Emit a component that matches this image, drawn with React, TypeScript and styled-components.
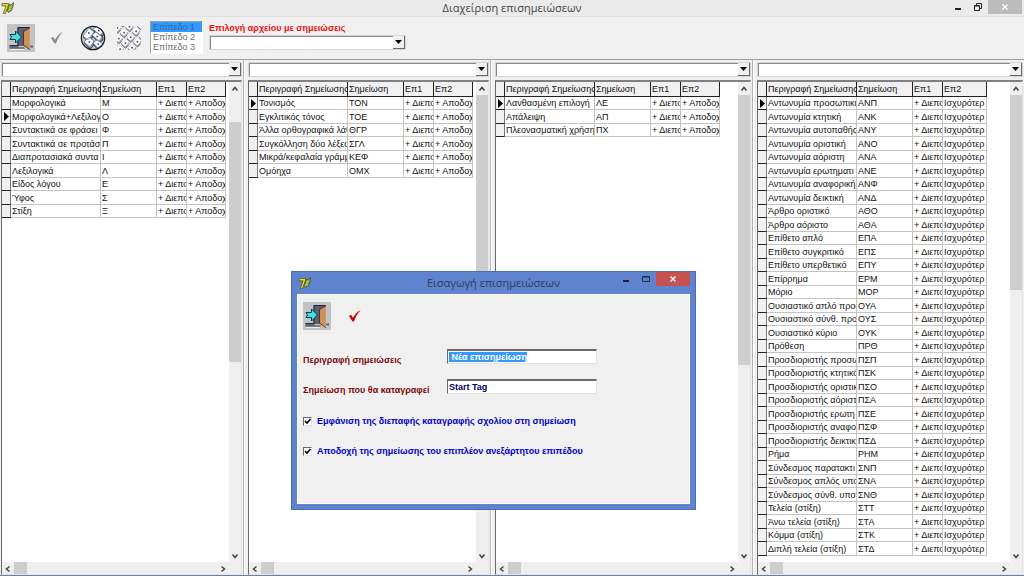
import React, { useEffect, useRef } from "react";
import styled, { createGlobalStyle, css } from "styled-components";

const GlobalStyle = createGlobalStyle`
  *, *::before, *::after { box-sizing: border-box; }
  html, body { margin: 0; padding: 0; background: #f0f0f0; }
  body, button, input, select, table {
    font-family: "Liberation Sans", Arial, sans-serif;
    font-size: 9px;
    line-height: 12px;
  }
  button { border: 0; padding: 0; background: none; display: flex; flex: none; align-items: center; justify-content: center; }
`;

const Window = styled.div`
  position: relative;
  min-height: 100vh;
  display: flex;
  flex-direction: column;
  background: #f0f0f0;
  color: #111;
  border-bottom: 2px solid #6f7f9d;
  overflow: hidden;
`;

const TitleBar = styled.header`
  display: grid;
  grid-template-columns: 76px 1fr 76px;
  align-items: center;
  height: 17px;
  background: #ebebeb;
  border-bottom: 1px solid #e0e0e0;
`;

const Title = styled.h1`
  margin: 0;
  font: 400 11px/16px "Open Sans", "Noto Sans", sans-serif;
  color: #444;
  text-align: center;
`;

const LogoSlot = styled.span`
  display: flex;
  padding-left: 1px;
`;

const WindowButtons = styled.div<{ $inset?: boolean }>`
  display: flex;
  justify-content: flex-end;
  align-items: flex-start;
  align-self: start;
  padding-right: ${(p) => (p.$inset ? 2 : 0)}px;
`;

const WindowButton = styled.button<{ $kind: "plain" | "muted" | "close" }>`
  height: 14px;
  width: ${(p) => (p.$kind === "plain" ? 20 : 34)}px;
  background: ${(p) => ({ plain: "transparent", muted: "#bcbcbc", close: "#c75050" })[p.$kind]};
`;

const Toolbar = styled.div`
  display: flex;
  align-items: flex-start;
  height: 43px;
  padding: 4px 7px 0;
  border-bottom: 1px solid #a0a0a0;
`;

const Tools = styled.div`
  display: flex;
  align-items: center;
  gap: 8px;
  padding-top: 3px;
  padding-right: 7px;
`;

const ToolButton = styled.button<{ $raised?: boolean }>`
  width: 28px;
  height: 28px;
  ${(p) => p.$raised && css`background: #c3c3c6;`}
`;

const LevelList = styled.select`
  width: 53px;
  height: 33px;
  padding: 0;
  overflow: hidden;
  border: 1px solid #a0a0a0;
  border-right-color: #fff;
  border-bottom-color: #fff;
  border-radius: 0;
  background: #fff;
  color: #6d6d6d;
  opacity: 1;
  outline: none;
  scrollbar-width: none;
  option {
    height: 10px;
    min-height: 10px;
    padding: 0 2px;
    font-size: 9px;
    line-height: 10px;
    color: #6d6d6d;
  }
  option:checked {
    background: #3399ff linear-gradient(#3399ff, #3399ff);
    color: #2f6ba8;
  }
`;

const FileField = styled.div`
  display: flex;
  flex-direction: column;
  gap: 1px;
  width: 203px;
  padding-left: 6px;
  padding-top: 1px;
`;

const FileLabel = styled.label`
  color: #ee1111;
  font-weight: 700;
  white-space: nowrap;
`;

const ComboBox = styled.div`
  display: grid;
  grid-template-columns: 1fr 12px;
  height: 15px;
  border: 1px solid #fff;
  border-top-color: #696969;
  border-left-color: #696969;
  background: #fff;
  outline: 1px solid #d5d5d5;
  outline-offset: -1px;
  box-shadow: inset 1px 1px 0 #8a8a8a;
`;

const ComboSelect = styled.select`
  grid-area: 1 / 1 / 2 / 3;
  appearance: none;
  width: 100%;
  height: 13px;
  border: 0;
  padding: 0 14px 0 3px;
  background: transparent;
  outline: none;
`;

const ComboArrow = styled.span`
  grid-area: 1 / 2 / 2 / 3;
  display: flex;
  align-items: center;
  justify-content: center;
  pointer-events: none;
  background: #f0f0f0;
  border-right: 1px solid #696969;
  border-bottom: 1px solid #696969;
`;

const Panels = styled.main`
  flex: 1;
  display: grid;
  grid-template-columns: 244fr 247fr 262fr 271fr;
  min-height: 0;
`;

const Panel = styled.section`
  display: flex;
  flex-direction: column;
  gap: 3px;
  min-width: 0;
  padding: 2px 1px 0;
  border-right: 1px solid #b4b4b4;
  & + & {
    padding-left: 3px;
    border-left: 1px solid #fff;
  }
  &:last-child {
    border-right: 0;
  }
`;

const GridFrame = styled.div`
  flex: 1;
  display: grid;
  grid-template-columns: minmax(0, 1fr) 12px;
  grid-template-rows: 1fr 12px;
  border: 1px solid #e3e3e3;
  border-top: 2px solid #808080;
  border-left-color: #696969;
  background: #fff;
`;

const TableArea = styled.div`
  overflow: hidden;
  padding-bottom: 6px;
`;

const DataTable = styled.table<{ $wide?: boolean }>`
  table-layout: fixed;
  width: ${(p) => (p.$wide ? 229 : 224)}px;
  border-collapse: separate;
  border-spacing: 0;
`;

const MarkerHead = styled.th`
  width: 9px;
  height: 15px;
  padding: 0;
  background: #f0f0f0;
  border-right: 1px solid #222;
  border-bottom: 1px solid #222;
`;

const HeadCell = styled.th<{ $width?: number }>`
  ${(p) => p.$width && css`width: ${p.$width}px;`}
  height: 15px;
  padding: 0 0 0 1px;
  overflow: hidden;
  white-space: nowrap;
  text-align: left;
  font-weight: 400;
  background: #f0f0f0;
  border-right: 1px solid #222;
  border-bottom: 1px solid #222;
`;

const Row = styled.tr`
  height: 13px;
  &:nth-child(even) { height: 14px; }
`;

const MarkerCell = styled.td`
  padding: 0;
  line-height: 0;
  background: #f0f0f0;
  border-right: 1px solid #777;
  border-bottom: 1px solid #222;
`;

const Cell = styled.td`
  padding: 0 0 0 1px;
  overflow: hidden;
  white-space: nowrap;
  text-overflow: clip;
  border-right: 1px solid #c4c4c4;
  border-bottom: 1px solid #c4c4c4;
`;

const ScrollBar = styled.div<{ $horizontal?: boolean }>`
  display: flex;
  flex-direction: ${(p) => (p.$horizontal ? "row" : "column")};
  background: #efefef;
`;

const ScrollButton = styled.button`
  width: 12px;
  height: 13px;
`;

const Track = styled.div<{ $offset: number }>`
  flex: 1;
  padding-top: ${(p) => p.$offset}px;
`;

const Thumb = styled.div<{ $size: number; $horizontal?: boolean }>`
  background: #cdcdcd;
  width: ${(p) => (p.$horizontal ? p.$size : 12)}px;
  height: ${(p) => (p.$horizontal ? 12 : p.$size)}px;
`;

const Corner = styled.div`
  background: #efefef;
`;

const Dialog = styled.div`
  position: absolute;
  left: 291px;
  top: 271px;
  width: 405px;
  padding: 0 5px 5px;
  background: #6083cf;
  border: 1px solid #4f6cb3;
`;

const DialogTitleBar = styled.div`
  display: grid;
  grid-template-columns: 76px 1fr 76px;
  align-items: center;
  height: 22px;
`;

const DialogTitle = styled.h2`
  margin: 0;
  font: 400 11px/16px "Open Sans", "Noto Sans", sans-serif;
  color: #2b3a60;
  text-align: center;
`;

const DialogBody = styled.form`
  display: flex;
  flex-direction: column;
  padding: 7px 5px 37px;
  background: #f0f0f0;
  border: 1px solid #fff;
`;

const DialogTools = styled.div`
  display: flex;
  gap: 10px;
  padding-bottom: 19px;
`;

const Fields = styled.div`
  display: flex;
  flex-direction: column;
  height: 57px;
`;

const FieldRow = styled.div`
  display: grid;
  flex: none;
  grid-template-columns: 144px 150px;
  height: 30px;
`;

const FieldLabel = styled.label`
  padding-top: 5px;
  font-weight: 700;
  color: #7d0a0a;
  white-space: nowrap;
`;

const TextBox = styled.input`
  height: 15px;
  padding: 0 1px;
  border: 1px solid #e3e3e3;
  border-top: 2px solid #696969;
  border-left-color: #696969;
  border-radius: 0;
  outline: none;
  background: #fff;
  color: #000066;
  font-weight: 700;
  &::selection { background: #3399ff; color: #fff; }
`;

const CheckRow = styled.label`
  display: flex;
  align-items: center;
  gap: 5px;
  height: 30px;
  font-weight: 700;
  color: #0000c8;
  white-space: nowrap;
`;

const CheckBox = styled.span`
  display: grid;
  width: 9px;
  height: 9px;
  input {
    grid-area: 1 / 1;
    appearance: none;
    width: 9px;
    height: 9px;
    margin: 0;
    background: #fff;
    border: 1px solid #e3e3e3;
    border-top-color: #696969;
    border-left-color: #696969;
  }
  svg { grid-area: 1 / 1; visibility: hidden; pointer-events: none; z-index: 1; }
  input:checked + svg { visibility: visible; }
`;

const AppLogo = () => (
  <svg width="14" height="14" viewBox="0 0 14 14" aria-hidden="true">
    <path d="M1 2.500h6.500v1.700L4.500 12.500H2.300L5 4.800H1z" fill="#e6dc28" stroke="#4c4c18" strokeWidth="0.700" />
    <path d="M7.500 6l1-3 1.500 1 2.500-2.500-.5 4-1.500 4-3 2-1.500-2z" fill="#8aa83c" stroke="#2f4a28" strokeWidth="0.700" />
    <path d="M8 7l3-2.500M7.500 9.500L10 8" stroke="#dfe04a" strokeWidth="1" />
  </svg>
);

const DoorIcon = () => (
  <svg width="28" height="28" viewBox="0 0 28 28" aria-hidden="true">
    <path d="M2.500 21.500h9v2h-9zM22 21.500h4v2h-4z" fill="#5a6478" />
    <path d="M2.500 24h15M2.500 21.500h9" stroke="#23262e" strokeWidth="0.900" />
    <path d="M3 25.500h14" stroke="#efefef" strokeWidth="1" />
    <rect x="10.500" y="3" width="12" height="19" fill="#56627a" />
    <path d="M11 22V3.500h11.500" fill="none" stroke="#20242e" strokeWidth="1" />
    <path d="M16.500 7.500L22.500 4v21.500L16.500 21z" fill="#d38f58" stroke="#59331a" strokeWidth="1" />
    <path d="M22.700 4.500v20.500" stroke="#f3c596" strokeWidth="0.900" />
    <circle cx="19" cy="14" r="1" fill="#fff2b0" stroke="#7a4520" strokeWidth="0.400" />
    <path d="M3 10.500h5.500V7l6 6-6 6v-3.500H3L4.500 13z" fill="#45dfe2" stroke="#083c45" strokeWidth="1" />
  </svg>
);

const CheckIcon = ({ color }: { color: string }) => (
  <svg width="14" height="14" viewBox="0 0 14 14" aria-hidden="true">
    <path d="M1 7l2-1.200 2 3C7 5 9.500 2.500 12.800 1 9.500 4 7.500 8 6 12.500H4.500z" fill={color} />
  </svg>
);

const KeysIcon = () => (
  <svg width="28" height="28" viewBox="0 0 28 28" aria-hidden="true">
    <clipPath id="keys-disc"><circle cx="14" cy="14" r="11.500" /></clipPath>
    <g clipPath="url(#keys-disc)">
      <rect width="28" height="28" fill="#b4c8cc" />
      <g strokeLinejoin="round">
        <path d="M4 13l7-9 5 4v2l-6 8zM15 6l5-4 6 6v3l-5 2zM13 12l4-4 7 5v3l-4 3zM5 19l5-6 6 5v2l-5 5zM14 20l4-4 6 4v3l-5 3z" fill="#75888e" stroke="#26363c" strokeWidth="0.700" />
        <path d="M4 12l6-8 5 4-6 8zM14 5l5-3 6 6-4 3zM13 11l4-3 6 5-3 4zM5 18l5-5 5 4-4 6zM14 19l4-3 6 4-5 4z" fill="#fbfbff" stroke="#5a666c" strokeWidth="0.500" />
      </g>
      <path d="M9 9h1.600M19 6.500h1.600M17.500 12.500h1.600M9.500 18h1.600M18.500 20h1.600" stroke="#3438a8" strokeWidth="1.600" />
    </g>
    <circle cx="14" cy="14" r="11.700" fill="none" stroke="#151a1c" strokeWidth="1.200" />
  </svg>
);

const KeyboardPatternIcon = () => (
  <svg width="26" height="26" viewBox="0 0 26 26" aria-hidden="true">
    <clipPath id="pattern-area"><rect x="1" y="1" width="24" height="24" /></clipPath>
    <g clipPath="url(#pattern-area)">
      <g transform="rotate(-48 13 13)">
        {[-5, 3, 11, 19].map((y, row) =>
          [-7, 1, 9, 17, 25].map((x) => (
            <g key={`${x}:${y}`}>
              <rect x={x + row} y={y} width="6.500" height="6.500" fill="#a9a9ae" />
              <rect x={x + row + 1} y={y} width="5.500" height="5" rx="1" fill="#fff" />
              <path d={`M${x + row} ${y + 1}v5.500h4`} fill="none" stroke="#6f7178" strokeWidth="0.900" />
              <rect x={x + row + 3} y={y + 2} width="1.600" height="1.600" fill="#3a3fa6" />
            </g>
          ))
        )}
      </g>
    </g>
  </svg>
);

const MinimizeGlyph = () => (
  <svg width="8" height="8" viewBox="0 0 8 8" aria-hidden="true"><path d="M1 6h6" stroke="#222" strokeWidth="2" /></svg>
);
const MaximizeGlyph = () => (
  <svg width="8" height="8" viewBox="0 0 8 8" aria-hidden="true"><path d="M.5 1.500h7v5h-7zM.5 2h7" fill="none" stroke="#1e2a48" /></svg>
);
const RestoreGlyph = () => (
  <svg width="8" height="8" viewBox="0 0 8 8" aria-hidden="true"><path d="M.5 2.500h5v5h-5zM2.500 2V.5h5v5H6M.5 3h5" fill="none" stroke="#222" /></svg>
);
const CloseGlyph = () => (
  <svg width="8" height="8" viewBox="0 0 8 8" aria-hidden="true"><path d="M1.500 1.500l5 5M6.500 1.500l-5 5" stroke="#fff" strokeWidth="1.300" /></svg>
);

const chevrons = {
  up: "M1.500 5.500L4 2.500l2.500 3",
  down: "M1.500 2.500L4 5.500l2.500-3",
  left: "M5.500 1.500L2.500 4l3 2.500",
  right: "M2.500 1.500L5.500 4l-3 2.500",
};
const Chevron = ({ dir }: { dir: keyof typeof chevrons }) => (
  <svg width="8" height="8" viewBox="0 0 8 8" aria-hidden="true">
    <path d={chevrons[dir]} fill="none" stroke="#444" strokeWidth="1.500" />
  </svg>
);

const Combo = ({ id, label }: { id?: string; label?: string }) => (
  <ComboBox>
    <ComboSelect id={id} aria-label={label} defaultValue=""><option value="" /></ComboSelect>
    <ComboArrow>
      <svg width="7" height="4" viewBox="0 0 7 4" aria-hidden="true"><path d="M0 0h7L3.500 4z" fill="#000" /></svg>
    </ComboArrow>
  </ComboBox>
);

type Note = [description: string, code: string];

interface PanelData {
  name: string;
  current: number;
  last: string;
  wide?: boolean;
  thumbTop: number;
  thumbSize: number;
  rows: Note[];
}

const panels: PanelData[] = [
  {
    name: "Επίπεδο 1", current: 1, last: "+ Αποδοχ", thumbTop: 27, thumbSize: 240,
    rows: [
      ["Μορφολογικά", "Μ"], ["Μορφολογικά+Λεξιλογι", "Ο"], ["Συντακτικά σε φράσει", "Φ"],
      ["Συντακτικά σε προτάσ", "Π"], ["Διαπροτασιακά συντα", "Ι"], ["Λεξιλογικά", "Λ"],
      ["Είδος λόγου", "Ε"], ["Ύφος", "Σ"], ["Στίξη", "Ξ"],
    ],
  },
  {
    name: "Επίπεδο 2", current: 0, last: "+ Αποδοχ", thumbTop: 0, thumbSize: 270,
    rows: [
      ["Τονισμός", "ΤΟΝ"], ["Εγκλιτικός τόνος", "ΤΟΕ"], ["Άλλα ορθογραφικά λάθ", "ΘΓΡ"],
      ["Συγκόλληση δύο λέξεω", "ΣΓΛ"], ["Μικρά/κεφαλαία γράμμ", "ΚΕΦ"], ["Ομόηχα", "ΟΜΧ"],
    ],
  },
  {
    name: "Επίπεδο 3", current: 0, last: "+ Αποδοχ", thumbTop: 0, thumbSize: 270,
    rows: [["Λανθασμένη επιλογή", "ΛΕ"], ["Απάλειψη", "ΑΠ"], ["Πλεονασματική χρήση", "ΠΧ"]],
  },
  {
    name: "Επίπεδο 4", current: 0, last: "Ισχυρότερ", wide: true, thumbTop: 0, thumbSize: 195,
    rows: [
      ["Αντωνυμία προσωπική", "ΑΝΠ"], ["Αντωνυμία κτητική", "ΑΝΚ"], ["Αντωνυμία αυτοπαθής", "ΑΝΥ"],
      ["Αντωνυμία οριστική", "ΑΝΟ"], ["Αντωνυμία αόριστη", "ΑΝΑ"], ["Αντωνυμία ερωτηματι", "ΑΝΕ"],
      ["Αντωνυμία αναφορική", "ΑΝΦ"], ["Αντωνυμία δεικτική", "ΑΝΔ"], ["Άρθρο οριστικό", "ΑΘΟ"],
      ["Άρθρο αόριστο", "ΑΘΑ"], ["Επίθετο απλό", "ΕΠΑ"], ["Επίθετο συγκριτικό", "ΕΠΣ"],
      ["Επίθετο υπερθετικό", "ΕΠΥ"], ["Επίρρημα", "ΕΡΜ"], ["Μόριο", "ΜΟΡ"],
      ["Ουσιαστικό απλό προσ", "ΟΥΑ"], ["Ουσιαστικό σύνθ. προσ", "ΟΥΣ"],
      ["Ουσιαστικό κύριο", "ΟΥΚ"], ["Πρόθεση", "ΠΡΘ"], ["Προσδιοριστής προσω", "ΠΣΠ"],
      ["Προσδιοριστής κτητικό", "ΠΣΚ"], ["Προσδιοριστής οριστικ", "ΠΣΟ"],
      ["Προσδιοριστής αόριστ", "ΠΣΑ"], ["Προσδιοριστής ερωτη", "ΠΣΕ"],
      ["Προσδιοριστής αναφο", "ΠΣΦ"], ["Προσδιοριστής δεικτικ", "ΠΣΔ"], ["Ρήμα", "ΡΗΜ"],
      ["Σύνδεσμος παρατακτι", "ΣΝΠ"], ["Σύνδεσμος απλός υποτ", "ΣΝΑ"],
      ["Σύνδεσμος σύνθ. υποτ", "ΣΝΘ"], ["Τελεία (στίξη)", "ΣΤΤ"],
      ["Άνω τελεία (στίξη)", "ΣΤΑ"], ["Κόμμα (στίξη)", "ΣΤΚ"], ["Διπλή τελεία (στίξη)", "ΣΤΔ"],
    ],
  },
];

const NotePanel = ({ data }: { data: PanelData }) => (
  <Panel aria-label={data.name}>
    <Combo label={data.name} />
    <GridFrame>
      <TableArea>
        <DataTable $wide={data.wide}>
          <thead>
            <tr>
              <MarkerHead aria-hidden="true" />
              <HeadCell $width={90}>Περιγραφή Σημείωσης</HeadCell>
              <HeadCell $width={56}>Σημείωση</HeadCell>
              <HeadCell $width={30}>Επ1</HeadCell>
              <HeadCell>Επ2</HeadCell>
            </tr>
          </thead>
          <tbody>
            {data.rows.map(([description, code], i) => (
              <Row key={code}>
                <MarkerCell>
                  {i === data.current && (
                    <svg width="7" height="9" viewBox="0 0 7 9" aria-hidden="true"><path d="M2 0l5 4.500L2 9z" fill="#000" /></svg>
                  )}
                </MarkerCell>
                <Cell>{description}</Cell>
                <Cell>{code}</Cell>
                <Cell>+ Διεπο</Cell>
                <Cell>{data.last}</Cell>
              </Row>
            ))}
          </tbody>
        </DataTable>
      </TableArea>
      <ScrollBar>
        <ScrollButton aria-label="Πάνω"><Chevron dir="up" /></ScrollButton>
        <Track $offset={data.thumbTop}><Thumb $size={data.thumbSize} /></Track>
        <ScrollButton aria-label="Κάτω"><Chevron dir="down" /></ScrollButton>
      </ScrollBar>
      <ScrollBar $horizontal>
        <ScrollButton aria-label="Αριστερά"><Chevron dir="left" /></ScrollButton>
        <Track $offset={0}><Thumb $horizontal $size={13} /></Track>
        <ScrollButton aria-label="Δεξιά"><Chevron dir="right" /></ScrollButton>
      </ScrollBar>
      <Corner />
    </GridFrame>
  </Panel>
);

const CheckOption = ({ children }: { children: React.ReactNode }) => (
  <CheckRow>
    <CheckBox>
      <input type="checkbox" defaultChecked />
      <svg width="9" height="9" viewBox="0 0 9 9" aria-hidden="true"><path d="M2 4l2 2 3.500-4" fill="none" stroke="#000" strokeWidth="1.600" /></svg>
    </CheckBox>
    {children}
  </CheckRow>
);

const InsertDialog = () => {
  const description = useRef<HTMLInputElement>(null);
  useEffect(() => {
    description.current?.focus();
    description.current?.select();
  }, []);
  return (
    <Dialog role="dialog" aria-labelledby="dialog-title">
      <DialogTitleBar>
        <LogoSlot><AppLogo /></LogoSlot>
        <DialogTitle id="dialog-title">Εισαγωγή επισημειώσεων</DialogTitle>
        <WindowButtons>
          <WindowButton $kind="plain" aria-label="Ελαχιστοποίηση"><MinimizeGlyph /></WindowButton>
          <WindowButton $kind="plain" aria-label="Μεγιστοποίηση"><MaximizeGlyph /></WindowButton>
          <WindowButton $kind="close" aria-label="Κλείσιμο"><CloseGlyph /></WindowButton>
        </WindowButtons>
      </DialogTitleBar>
      <DialogBody onSubmit={(e) => e.preventDefault()}>
        <DialogTools>
          <ToolButton type="button" $raised aria-label="Έξοδος"><DoorIcon /></ToolButton>
          <ToolButton type="submit" aria-label="Αποδοχή"><CheckIcon color="#c00808" /></ToolButton>
        </DialogTools>
        <Fields>
          <FieldRow>
            <FieldLabel htmlFor="description">Περιγραφή σημειώσεις</FieldLabel>
            <TextBox id="description" ref={description} defaultValue=" Νέα επισημείωση" />
          </FieldRow>
          <FieldRow>
            <FieldLabel htmlFor="tag">Σημείωση που θα καταγραφεί</FieldLabel>
            <TextBox id="tag" defaultValue="Start Tag" />
          </FieldRow>
        </Fields>
        <CheckOption>Εμφάνιση της διεπαφής καταγραφής σχολίου στη σημείωση</CheckOption>
        <CheckOption>Αποδοχή της σημείωσης του επιπλέον ανεξάρτητου επιπέδου</CheckOption>
      </DialogBody>
    </Dialog>
  );
};

export default function App() {
  return (
    <Window>
      <GlobalStyle />
      <TitleBar>
        <LogoSlot><AppLogo /></LogoSlot>
        <Title>Διαχείριση επισημειώσεων</Title>
        <WindowButtons $inset>
          <WindowButton $kind="plain" aria-label="Ελαχιστοποίηση"><MinimizeGlyph /></WindowButton>
          <WindowButton $kind="plain" aria-label="Επαναφορά"><RestoreGlyph /></WindowButton>
          <WindowButton $kind="muted" aria-label="Κλείσιμο"><CloseGlyph /></WindowButton>
        </WindowButtons>
      </TitleBar>
      <Toolbar>
        <Tools>
          <ToolButton $raised aria-label="Έξοδος"><DoorIcon /></ToolButton>
          <ToolButton disabled aria-label="Αποδοχή"><CheckIcon color="#8c8c8c" /></ToolButton>
          <ToolButton aria-label="Πλήκτρα"><KeysIcon /></ToolButton>
          <ToolButton aria-label="Πληκτρολόγιο"><KeyboardPatternIcon /></ToolButton>
        </Tools>
        <LevelList size={3} disabled aria-label="Επίπεδο" defaultValue="1">
          <option value="1">Επίπεδο 1</option>
          <option value="2">Επίπεδο 2</option>
          <option value="3">Επίπεδο 3</option>
        </LevelList>
        <FileField>
          <FileLabel htmlFor="note-file">Επιλογή αρχείου με σημειώσεις</FileLabel>
          <Combo id="note-file" />
        </FileField>
      </Toolbar>
      <Panels>
        {panels.map((panel) => <NotePanel key={panel.name} data={panel} />)}
      </Panels>
      <InsertDialog />
    </Window>
  );
}
